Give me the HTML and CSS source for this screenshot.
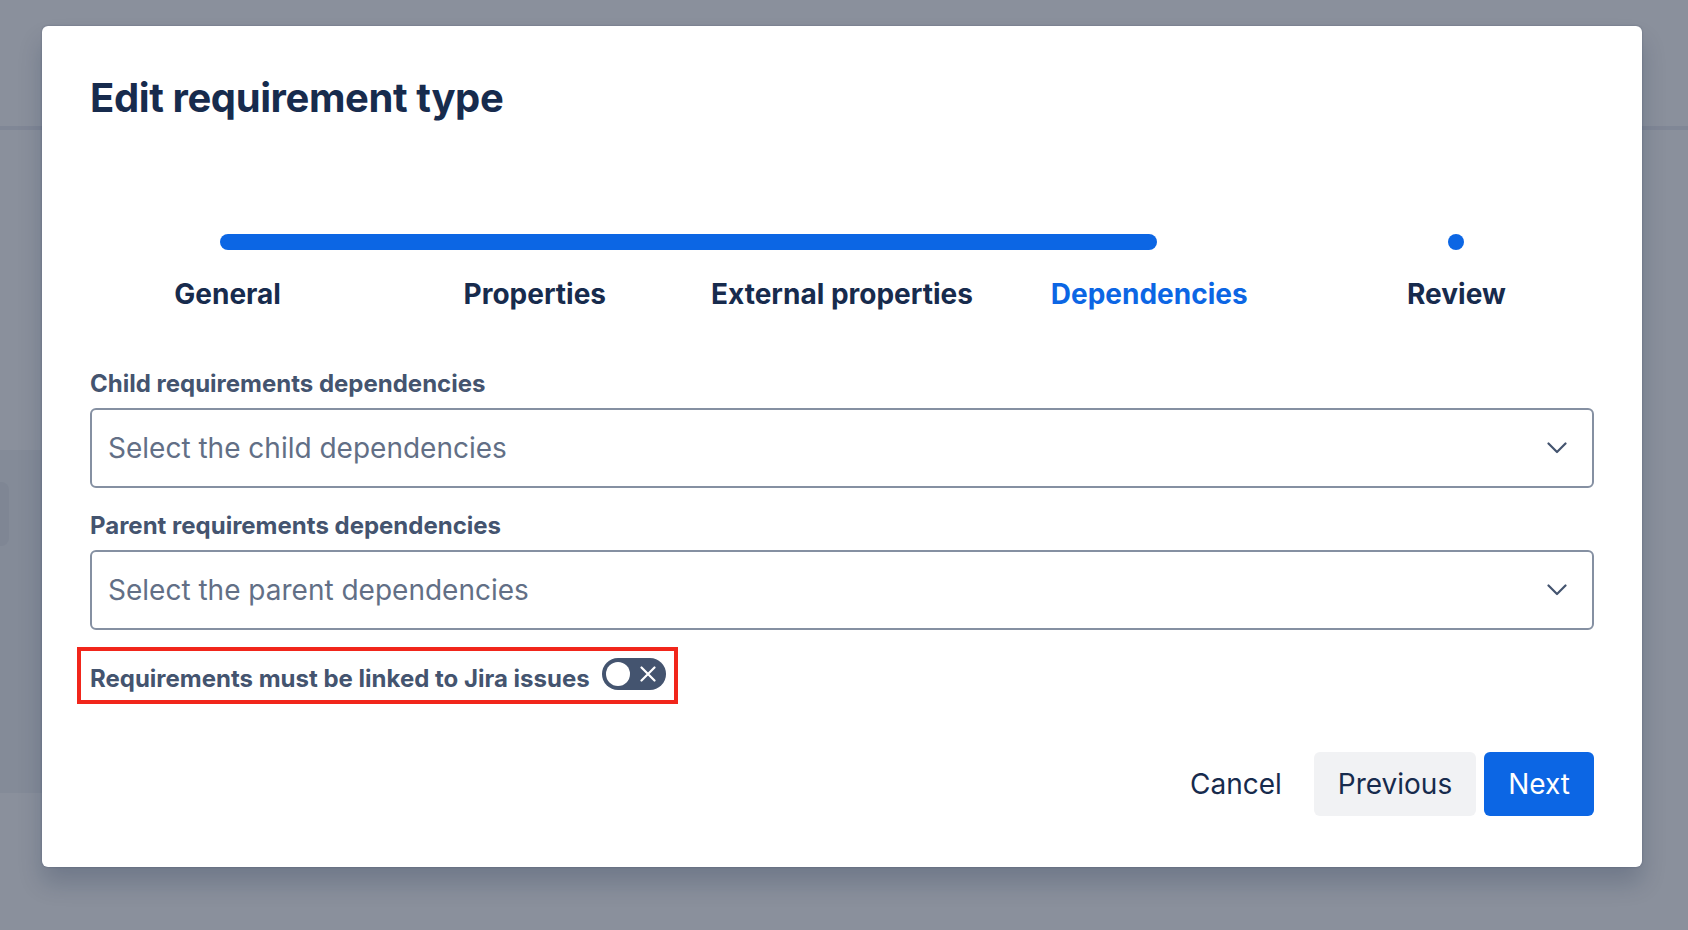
FILE: index.html
```html
<!DOCTYPE html>
<html lang="en">

<head>
    <meta charset="utf-8">
    <meta name="viewport" content="width=device-width, initial-scale=1.0">
    <title>Edit requirement type</title>
    <link rel="stylesheet" href="styles.css">
</head>

<body>
    <div class="page">
        <header class="topbar"></header>
        <aside class="sidebar">
            <div class="sidebar-item"></div>
        </aside>
    </div>

    <section class="modal">
        <h1>Edit requirement type</h1>

        <div class="stepper">
            <div class="track"></div>
            <div class="dot"></div>
            <span class="step">General</span>
            <span class="step">Properties</span>
            <span class="step">External properties</span>
            <span class="step current">Dependencies</span>
            <span class="step">Review</span>
        </div>

        <form class="fields">
            <label class="field-label">Child requirements dependencies</label>
            <div class="select">
                <span>Select the child dependencies</span>
                <svg width="20" height="12" viewBox="0 0 20 12"><polyline points="1.5,1.5 10,10 18.5,1.5" /></svg>
            </div>

            <label class="field-label second">Parent requirements dependencies</label>
            <div class="select">
                <span>Select the parent dependencies</span>
                <svg width="20" height="12" viewBox="0 0 20 12"><polyline points="1.5,1.5 10,10 18.5,1.5" /></svg>
            </div>

            <div class="highlight">
                <div class="toggle-row">
                    <span class="field-label">Requirements must be linked to Jira issues</span>
                    <span class="toggle">
                        <span class="knob"></span>
                        <svg width="16" height="16" viewBox="0 0 16 16"><path d="M1.5 1.5 L14.5 14.5 M14.5 1.5 L1.5 14.5" /></svg>
                    </span>
                </div>
            </div>
        </form>

        <footer class="actions">
            <button class="btn subtle">Cancel</button>
            <button class="btn default">Previous</button>
            <button class="btn primary">Next</button>
        </footer>
    </section>
</body>

</html>
```

FILE: styles.css
```css
* {
    box-sizing: border-box;
}

body {
    margin: 0;
    height: 930px;
    overflow: hidden;
    background-color: #8a909c;
    font-family: Inter, "Noto Sans", sans-serif;
    color: #172b4d;
}

/* page behind the blanket */
.topbar {
    height: 130px;
    border-bottom: 4px solid #808796;
}

.sidebar {
    margin: 320px 0 0 -20px;
    width: 400px;
    height: 343px;
    padding-top: 32px;
    border-radius: 8px;
    background-color: #848b98;
}

.sidebar-item {
    width: 29px;
    height: 64px;
    border-radius: 8px;
    background-color: #7f8694;
}

/* modal */
.modal {
    position: absolute;
    top: 26px;
    left: 42px;
    width: 1600px;
    padding: 48px 48px 51px;
    background-color: #fff;
    border-radius: 6px;
    box-shadow: 0 16px 24px rgba(9, 30, 66, 0.2), 0 0 2px rgba(9, 30, 66, 0.3);
}

h1 {
    margin: 0;
    font-size: 40px;
    line-height: 48px;
    font-weight: 700;
    letter-spacing: -0.4px;
    color: #172b4d;
}

.stepper {
    display: grid;
    grid-template-columns: repeat(5, 1fr);
    row-gap: 24px;
    margin: 112px -16px 0;
}

.track {
    grid-column: 1 / 5;
    height: 16px;
    margin: 0 calc(12.5% - 8px);
    border-radius: 8px;
    background-color: #0c66e4;
}

.dot {
    width: 16px;
    height: 16px;
    justify-self: center;
    border-radius: 50%;
    background-color: #0c66e4;
}

.step {
    text-align: center;
    font-size: 28px;
    line-height: 40px;
    font-weight: 700;
    color: #172b4d;
}

.step.current {
    color: #0c66e4;
}

.fields {
    display: flex;
    flex-direction: column;
    align-items: flex-start;
    margin-top: 54px;
}

.field-label {
    font-size: 24px;
    line-height: 32px;
    font-weight: 700;
    color: #44546f;
}

.fields > .field-label {
    margin-bottom: 8px;
}

.fields > .second {
    margin-top: 22px;
}

.select {
    display: flex;
    align-items: center;
    justify-content: space-between;
    width: 100%;
    height: 80px;
    padding: 0 25px 0 16px;
    border: 2px solid #8590a2;
    border-radius: 6px;
    font-size: 28px;
    color: #626f86;
}

.select svg {
    fill: none;
    stroke: #44546f;
    stroke-width: 2.2;
    stroke-linecap: round;
    stroke-linejoin: round;
}

.highlight {
    margin: 17px 0 0 -13px;
    padding: 7px 8px 10px 9px;
    border: 4px solid #f1261b;
}

.toggle-row {
    display: flex;
    align-items: flex-start;
}

.toggle-row .field-label {
    margin: 5px 0 -5px;
}

.toggle {
    display: flex;
    align-items: center;
    justify-content: space-between;
    width: 64px;
    height: 32px;
    margin-left: 12px;
    padding: 0 10px 0 4px;
    border-radius: 16px;
    background-color: #44546f;
}

.knob {
    width: 24px;
    height: 24px;
    border-radius: 50%;
    background-color: #fff;
}

.toggle svg {
    stroke: #fff;
    stroke-width: 2.2;
    stroke-linecap: round;
}

.actions {
    display: flex;
    justify-content: flex-end;
    gap: 8px;
    padding-top: 48px;
}

.btn {
    height: 64px;
    padding: 0 24px;
    border: none;
    border-radius: 6px;
    font-family: Inter, "Noto Sans", sans-serif;
    font-size: 28px;
    font-weight: 400;
    cursor: pointer;
}

.subtle {
    background: none;
    color: #172b4d;
}

.default {
    background-color: #f1f2f4;
    color: #172b4d;
}

.primary {
    background-color: #0c66e4;
    color: #fff;
}
```
